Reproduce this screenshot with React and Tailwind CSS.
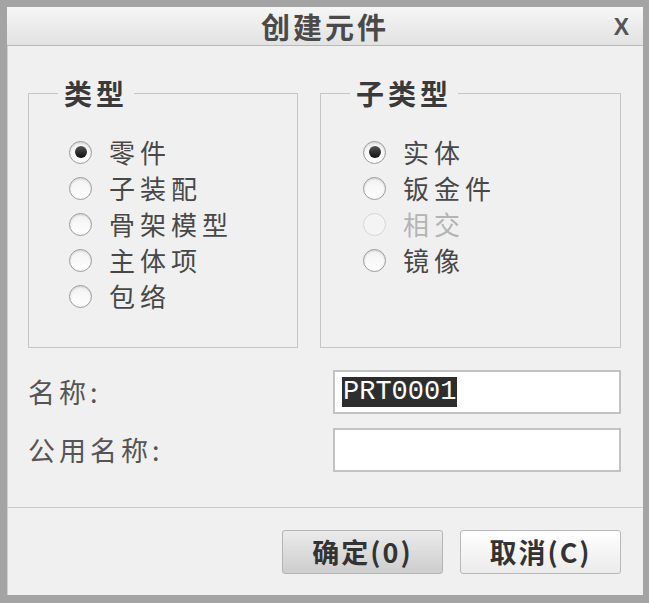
import React, { useState } from 'react';

const cjk = { fontFamily: '"Noto Sans CJK SC", "Noto Sans", sans-serif' };

const Radio = ({ checked, disabled }) => (
  <span
    className={`flex h-[23px] w-[23px] shrink-0 items-center justify-center rounded-full border-[1.5px] ${
      disabled
        ? 'border-[#d6d6d6] bg-[#f4f4f4]'
        : 'border-[#9c9c9c] bg-gradient-to-b from-[#f2f2f2] to-white shadow-[inset_0_1px_2px_rgba(0,0,0,0.15)]'
    }`}
  >
    {checked && (
      <span className="h-[12px] w-[12px] rounded-full bg-gradient-to-b from-[#555] to-[#111]" />
    )}
  </span>
);

const Group = ({ title, items, value, onChange, offset, className }) => (
  <fieldset className={`h-[273px] border border-[#c6c6c6] ${className}`}>
    <legend className="ml-[29px] px-[6px] text-[28px] font-bold leading-[36px] tracking-[4px] text-[#3a3a3a]">
      {title}
    </legend>
    <div className={`mt-[23px] flex flex-col ${offset}`}>
      {items.map((item) => (
        <label
          key={item.label}
          className={`flex h-[36px] items-center gap-[17px] ${item.disabled ? 'text-[#b4b4b4]' : 'text-[#484848]'}`}
          onClick={() => !item.disabled && onChange(item.label)}
        >
          <Radio checked={value === item.label} disabled={item.disabled} />
          <span className="text-[26px] leading-none tracking-[5px]">{item.label}</span>
        </label>
      ))}
    </div>
  </fieldset>
);

export default function App() {
  const [type, setType] = useState('零件');
  const [subType, setSubType] = useState('实体');

  return (
    <div
      className="h-[603px] w-[649px] border-b-[8px] border-l-[7px] border-r-[6px] border-t-[7px] border-[#a4a4a4]"
      style={cjk}
    >
      <div className="flex h-full flex-col bg-[#f0f0f0] shadow-[inset_1px_0_0_#d0d0d0]">
        {/* title bar */}
        <div className="relative flex h-[39px] shrink-0 items-center justify-center border-b border-[#b9b9b9] bg-gradient-to-b from-[#f6f6f6] to-[#e2e2e2]">
          <span className="text-[29px] font-bold leading-none tracking-[3px] text-[#4a4a4a]">创建元件</span>
          <span
            className="absolute right-[14px] top-[9px] text-[23px] font-bold leading-none text-[#555]"
            style={{ fontFamily: '"Liberation Sans", sans-serif' }}
          >
            X
          </span>
        </div>

        {/* groups */}
        <div className="mt-[29px] flex gap-[22px] pl-[21px] pr-[22px]">
          <Group
            title="类型"
            className="w-[270px]"
            offset="pl-[40px]"
            value={type}
            onChange={setType}
            items={[
              { label: '零件' },
              { label: '子装配' },
              { label: '骨架模型' },
              { label: '主体项' },
              { label: '包络' },
            ]}
          />
          <Group
            title="子类型"
            className="flex-1"
            offset="pl-[42px]"
            value={subType}
            onChange={setSubType}
            items={[
              { label: '实体' },
              { label: '钣金件' },
              { label: '相交', disabled: true },
              { label: '镜像' },
            ]}
          />
        </div>

        {/* name fields */}
        <div className="mt-[22px] flex flex-col gap-[14px] pl-[21px] pr-[22px]">
          <div className="flex items-center">
            <span className="w-[305px] text-[27px] tracking-[4px] text-[#555]">名称:</span>
            <div className="flex h-[44px] flex-1 items-center border-2 border-[#c2c2c2] bg-white pl-[7px]">
              <span
                className="bg-[#2e2e2e] px-[1px] text-[27px] leading-[30px] text-white"
                style={{ fontFamily: '"Liberation Mono", monospace' }}
              >
                PRT0001
              </span>
            </div>
          </div>
          <div className="flex items-center">
            <span className="w-[305px] text-[27px] tracking-[4px] text-[#555]">公用名称:</span>
            <div className="h-[44px] flex-1 border-2 border-[#c2c2c2] bg-white" />
          </div>
        </div>

        {/* footer */}
        <div className="mt-[35px] border-t border-[#c9c9c9] shadow-[inset_0_1px_0_#ffffff]" />
        <div className="mt-[22px] flex justify-end gap-[17px] pr-[22px]">
          <button className="h-[44px] w-[161px] rounded-[3px] border border-[#b4b4b4] bg-gradient-to-b from-[#ebebeb] to-[#cdcdcd] text-[27px] font-bold tracking-[2px] text-[#333]">
            确定(0)
          </button>
          <button className="h-[44px] w-[161px] rounded-[3px] border border-[#b8b8b8] bg-gradient-to-b from-[#ffffff] to-[#ebebeb] text-[27px] font-bold tracking-[2px] text-[#333]">
            取消(C)
          </button>
        </div>
      </div>
    </div>
  );
}
